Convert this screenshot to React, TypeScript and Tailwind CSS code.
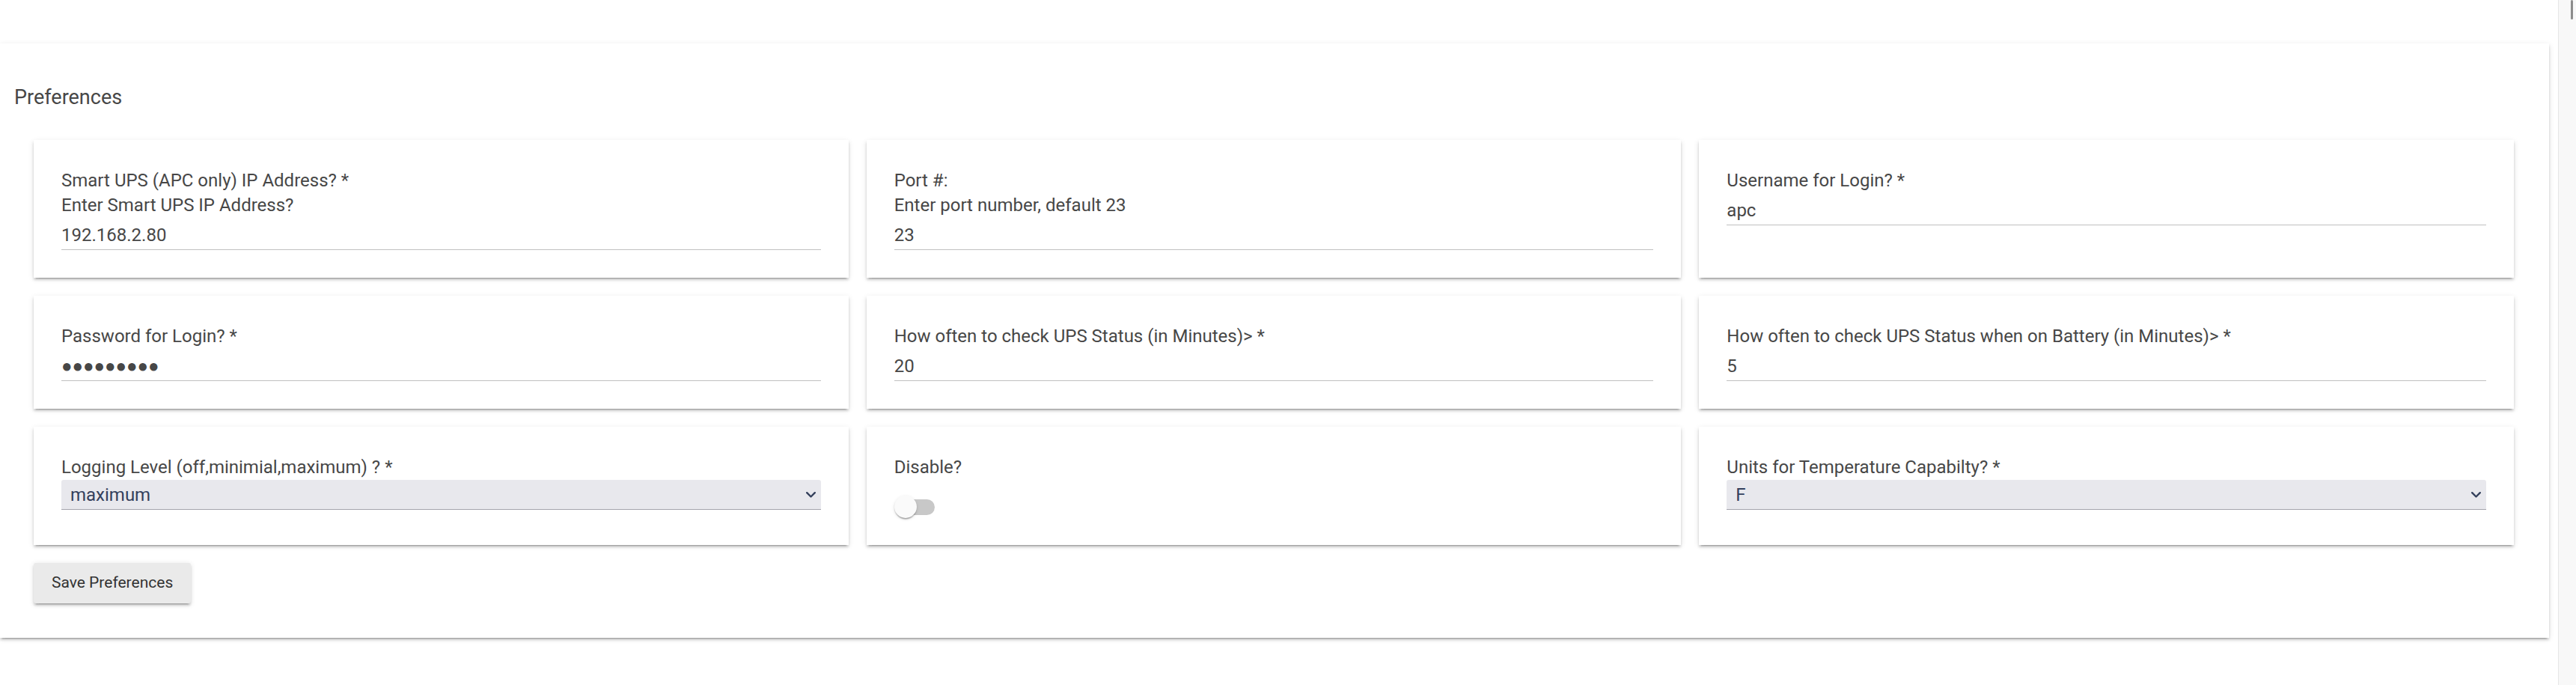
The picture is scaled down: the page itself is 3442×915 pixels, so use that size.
import { useState } from "react";

type Field =
  | { kind: "text"; id: string; label: string; help?: string; value: string }
  | { kind: "password"; id: string; label: string; value: string }
  | { kind: "select"; id: string; label: string; value: string; options: string[] }
  | { kind: "switch"; id: string; label: string; checked: boolean };

const fields: Field[] = [
  {
    kind: "text",
    id: "ip",
    label: "Smart UPS (APC only) IP Address? *",
    help: "Enter Smart UPS IP Address?",
    value: "192.168.2.80"
  },
  {
    kind: "text",
    id: "port",
    label: "Port #:",
    help: "Enter port number, default 23",
    value: "23"
  },
  { kind: "text", id: "username", label: "Username for Login? *", value: "apc" },
  { kind: "password", id: "password", label: "Password for Login? *", value: "apcapcapc" },
  {
    kind: "text",
    id: "interval",
    label: "How often to check UPS Status (in Minutes)> *",
    value: "20"
  },
  {
    kind: "text",
    id: "batteryInterval",
    label: "How often to check UPS Status when on Battery (in Minutes)> *",
    value: "5"
  },
  {
    kind: "select",
    id: "logging",
    label: "Logging Level (off,minimial,maximum) ? *",
    value: "maximum",
    options: ["off", "minimial", "maximum"]
  },
  { kind: "switch", id: "disable", label: "Disable?", checked: false },
  {
    kind: "select",
    id: "units",
    label: "Units for Temperature Capabilty? *",
    value: "F",
    options: ["F", "C"]
  }
];

const paperShadow =
  "shadow-[0_4.5px_1.5px_-3px_rgba(0,0,0,0.2),0_3px_3px_0_rgba(0,0,0,0.14),0_1.5px_7.5px_0_rgba(0,0,0,0.12)]";

function Toggle({ initial }: { initial: boolean }) {
  const [on, setOn] = useState(initial);

  return (
    <button
      type="button"
      role="switch"
      aria-checked={on}
      onClick={() => setOn((value) => !value)}
      className="relative mt-[26px] mb-[3px] h-[21px] w-[54px]"
    >
      <span className="absolute top-0 left-[3px] h-[21px] w-[51px] rounded-full bg-[#c8c8c8]" />
      <span
        className={`absolute -top-[5px] h-[30px] w-[30px] rounded-full bg-[#fafafa] shadow-[0_3px_1.5px_-1.5px_rgba(0,0,0,0.2),0_1.5px_1.5px_0_rgba(0,0,0,0.14),0_1.5px_4.5px_0_rgba(0,0,0,0.12)] ${
          on ? "left-[24px]" : "left-0"
        }`}
      />
    </button>
  );
}

function FieldCard({ field }: { field: Field }) {
  return (
    <div className={`flex flex-col bg-white px-[37px] pt-[38px] pb-[37px] ${paperShadow}`}>
      <label
        htmlFor={field.id}
        className="text-[24px] leading-[33px] whitespace-nowrap text-[#474747]"
      >
        {field.label}
      </label>
      {field.kind === "text" && field.help ? (
        <p className="text-[24px] leading-[33px] text-[#474747]">{field.help}</p>
      ) : null}

      {field.kind === "text" ? (
        <input
          id={field.id}
          defaultValue={field.value}
          className="mt-[6px] h-[37px] w-full border-b border-[#c0c0c0] bg-transparent pb-[3px] text-[24px] leading-[33px] text-[#474747] outline-none"
        />
      ) : null}

      {field.kind === "password" ? (
        <div
          id={field.id}
          className="mt-[6px] flex h-[37px] w-full items-center border-b border-[#c0c0c0] pb-[3px]"
        >
          <span className="font-['Liberation_Sans',sans-serif] text-[24px] leading-[33px] text-[#474747]">
            {"●".repeat(field.value.length)}
          </span>
        </div>
      ) : null}

      {field.kind === "select" ? (
        <div className="relative">
          <select
            id={field.id}
            defaultValue={field.value}
            className="h-[40px] w-full appearance-none rounded-t-[3px] border-b border-[#a4a4ac] bg-[#e8e8ed] pl-[12px] text-[24px] text-[#34405c] outline-none"
          >
            {field.options.map((option) => (
              <option key={option} value={option}>
                {option}
              </option>
            ))}
          </select>
          <svg
            className="pointer-events-none absolute top-[16px] right-[7px]"
            width="13"
            height="8"
            viewBox="0 0 13 8"
            fill="none"
          >
            <path
              d="M1.2 1.2 6.5 6.5 11.8 1.2"
              stroke="#34405c"
              strokeWidth="2.4"
              strokeLinecap="round"
              strokeLinejoin="round"
            />
          </svg>
        </div>
      ) : null}

      {field.kind === "switch" ? <Toggle initial={field.checked} /> : null}
    </div>
  );
}

export default function App() {
  return (
    <div className="flex min-h-screen bg-white font-['Roboto',sans-serif]">
      <main className="flex-1 pt-[58px] pr-[12px]">
        <section className={`bg-white pt-[52px] pb-[46px] ${paperShadow}`}>
          <h2 className="pl-[19px] text-[27px] leading-[40px] text-[#474747]">
            Preferences
          </h2>
          <div className="mt-[37px] grid grid-cols-3 gap-[24px] pr-[47px] pl-[45px]">
            {fields.map((field) => (
              <FieldCard key={field.id} field={field} />
            ))}
          </div>
          <button
            type="button"
            className={`mt-[24px] ml-[45px] h-[54px] rounded-[3px] bg-[#eaeaea] px-[24px] text-[21px] text-[#333333] ${paperShadow}`}
          >
            Save Preferences
          </button>
        </section>
      </main>
      <aside className="relative w-[24px] shrink-0 border-l border-[#e6e6e6] bg-[#f8f8f8]">
        <span className="absolute top-0 left-[16px] h-[26px] w-[3px] rounded-full bg-[#8c8c8c]" />
      </aside>
    </div>
  );
}
